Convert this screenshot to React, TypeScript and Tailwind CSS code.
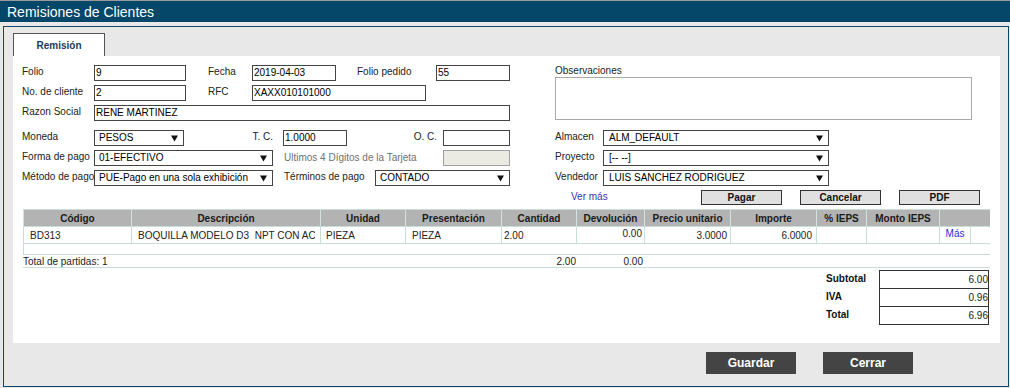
import React from "react";

const lbl = "text-[10px] leading-[14px] text-[#222] self-start whitespace-nowrap";

function Box({ className = "", children }: { className?: string; children?: React.ReactNode }) {
  return (
    <div
      className={`h-4 border border-[#444] bg-white flex items-center pl-px text-[10px] leading-[14px] text-black whitespace-nowrap overflow-hidden ${className}`}
    >
      {children}
    </div>
  );
}

function Arrow() {
  return (
    <svg width="7" height="7" viewBox="0 0 7 7" className="shrink-0">
      <polygon points="0,0.5 7,0.5 3.5,6.5" fill="#111" />
    </svg>
  );
}

function Sel({ className = "", children, pl = "pl-[4px]" }: { className?: string; children?: React.ReactNode; pl?: string }) {
  return (
    <div
      className={`h-4 border border-[#444] bg-white flex items-center justify-between ${pl} pr-[5px] text-[10px] leading-[14px] text-black whitespace-nowrap overflow-hidden ${className}`}
    >
      <span>{children}</span>
      <Arrow />
    </div>
  );
}

const cols = [
  { name: "Código", w: "w-[108px]" },
  { name: "Descripción", w: "w-[189px]" },
  { name: "Unidad", w: "w-[85px]" },
  { name: "Presentación", w: "w-[96px]" },
  { name: "Cantidad", w: "w-[75px]" },
  { name: "Devolución", w: "w-[68px]" },
  { name: "Precio unitario", w: "w-[86px]" },
  { name: "Importe", w: "w-[86px]" },
  { name: "% IEPS", w: "w-[50px]" },
  { name: "Monto IEPS", w: "w-[73px]" },
  { name: "", w: "w-[51px]" },
];

const cellB = "border-l border-[#c9ddd9] h-full flex items-center text-[10px] whitespace-pre overflow-hidden";

export default function App() {
  return (
    <div className="w-[1010px] h-[388px] bg-white font-['Liberation_Sans',Arial,sans-serif] overflow-hidden">
      {/* Title bar */}
      <div className="h-[22px] border-t border-[#9a9a9a] bg-[#044769] flex items-center pl-[7px]">
        <span className="text-white text-[14px] leading-[16px]">Remisiones de Clientes</span>
      </div>

      <div className="bg-[#e8e8e8] pt-[4px] pl-[3px] h-[366px]">
        <div className="w-[1006px] h-[361px] border border-[#0d4a6b] bg-[#e8e8e8]">
          {/* Tab */}
          <div className="ml-[9px] mt-[6px] w-[92px] h-[23px] border-t border-x border-[#555] bg-white flex items-center justify-center">
            <span className="text-[10px] font-bold text-[#1b3a57]">Remisión</span>
          </div>

          {/* White panel */}
          <div className="ml-[9px] w-[987px] h-[287px] bg-white pl-[9px] pt-[9px]">
            <div className="flex">
              {/* Left column */}
              <div className="w-[533px] flex flex-col gap-[4px]">
                <div className="flex h-4">
                  <span className={`${lbl} w-[72px]`}>Folio</span>
                  <Box className="w-[92px]">9</Box>
                  <span className={`${lbl} ml-[22px] w-[44px]`}>Fecha</span>
                  <Box className="w-[84px]">2019-04-03</Box>
                  <span className={`${lbl} ml-[21px] w-[79px]`}>Folio pedido</span>
                  <Box className="w-[74px]">55</Box>
                </div>
                <div className="flex h-4">
                  <span className={`${lbl} w-[72px]`}>No. de cliente</span>
                  <Box className="w-[92px]">2</Box>
                  <span className={`${lbl} ml-[22px] w-[44px]`}>RFC</span>
                  <Box className="w-[174px]">XAXX010101000</Box>
                </div>
                <div className="flex h-4">
                  <span className={`${lbl} w-[72px]`}>Razon Social</span>
                  <Box className="w-[416px]">RENE MARTINEZ</Box>
                </div>
                <div className="flex h-4 mt-[5px]">
                  <span className={`${lbl} w-[72px]`}>Moneda</span>
                  <Sel className="w-[90px]">PESOS</Sel>
                  <span className={`${lbl} w-[99px] text-right pr-[10px]`}>T. C.</span>
                  <Box className="w-[64px]">1.0000</Box>
                  <span className={`${lbl} w-[96px] text-right pr-[6px]`}>O. C.</span>
                  <Box className="w-[67px]"></Box>
                </div>
                <div className="flex h-4">
                  <span className={`${lbl} w-[72px]`}>Forma de pago</span>
                  <Sel className="w-[179px]">01-EFECTIVO</Sel>
                  <span className="text-[10px] leading-[16px] text-[#707070] ml-[11px] w-[159px] whitespace-nowrap">
                    Ultimos 4 Dígitos de la Tarjeta
                  </span>
                  <div className="w-[67px] h-4 border border-[#a0a0a0] bg-[#ebebe4]"></div>
                </div>
                <div className="flex h-4">
                  <span className={`${lbl} w-[72px]`}>Método de pago</span>
                  <Sel className="w-[179px]">PUE-Pago en una sola exhibición</Sel>
                  <span className={`${lbl} ml-[11px] w-[91px]`}>Términos de pago</span>
                  <Sel className="w-[135px]">CONTADO</Sel>
                </div>
              </div>

              {/* Right column */}
              <div className="flex flex-col">
                <span className="text-[10px] leading-[12px] h-[12px] text-[#222]">Observaciones</span>
                <div className="w-[417px] h-[43px] border border-[#a9a9a9] bg-white"></div>
                <div className="mt-[10px] flex flex-col gap-[4px]">
                  <div className="flex h-4">
                    <span className={`${lbl} w-[48px]`}>Almacen</span>
                    <Sel className="w-[226px]" pl="pl-[5px]">ALM_DEFAULT</Sel>
                  </div>
                  <div className="flex h-4">
                    <span className={`${lbl} w-[48px]`}>Proyecto</span>
                    <Sel className="w-[226px]" pl="pl-[5px]">[-- --]</Sel>
                  </div>
                  <div className="flex h-4">
                    <span className={`${lbl} w-[48px]`}>Vendedor</span>
                    <Sel className="w-[226px]" pl="pl-[5px]">LUIS SANCHEZ RODRIGUEZ</Sel>
                  </div>
                </div>
                <div className="mt-[4px] flex h-[15px] items-center">
                  <span className="ml-[16px] w-[130px] text-[10px] leading-[12px] text-[#3535b5] -mt-px">Ver más</span>
                  <div className="flex gap-[18px]">
                    {["Pagar", "Cancelar", "PDF"].map((b) => (
                      <div
                        key={b}
                        className="w-[81px] h-[15px] border border-[#333] bg-[#e0e0e0] flex items-center justify-center text-[10px] font-bold text-[#111]"
                      >
                        {b}
                      </div>
                    ))}
                  </div>
                </div>
              </div>
            </div>

            {/* Table */}
            <div className="ml-px mt-[4px] w-[967px]">
              <div className="flex h-[17px] border-t border-[#c9ddd9] bg-[#b3b3b3]">
                {cols.map((c, i) => (
                  <div
                    key={i}
                    className={`${c.w} border-l border-[#d3e3e0] h-full flex items-center justify-center text-[10px] font-bold text-[#1a1a1a] whitespace-nowrap`}
                  >
                    {c.name}
                  </div>
                ))}
              </div>
              <div className="flex h-[18px] border-y border-[#c9ddd9] text-[#222]">
                <div className={`${cellB} w-[108px] pl-[6px]`}>BD313</div>
                <div className={`${cellB} w-[189px] pl-[6px]`}>
                  <span className="w-[177px] shrink-0 overflow-hidden whitespace-pre">BOQUILLA MODELO D3  NPT CON ACERO</span>
                </div>
                <div className={`${cellB} w-[85px] pl-[5px]`}>PIEZA</div>
                <div className={`${cellB} w-[96px] pl-[6px]`}>PIEZA</div>
                <div className={`${cellB} w-[75px] pl-[2px]`}>2.00</div>
                <div className={`${cellB} w-[68px] justify-end pr-[2px] pb-[4px]`}>0.00</div>
                <div className={`${cellB} w-[86px] justify-end pr-[3px]`}>3.0000</div>
                <div className={`${cellB} w-[86px] justify-end pr-[4px]`}>6.0000</div>
                <div className={`${cellB} w-[50px]`}></div>
                <div className={`${cellB} w-[73px]`}></div>
                <div className={`${cellB} w-[32px] border-r justify-center pb-[4px]`}>
                  <span className="text-[#2e2ed2]">Más</span>
                </div>
              </div>
              <div className="h-[11px] border-l border-b border-[#c9ddd9]"></div>
              <div className="flex h-[13px] border-b border-[#c9ddd9] items-center text-[10px] text-[#222]">
                <span className="w-[478px] whitespace-nowrap">Total de partidas: 1</span>
                <span className="w-[75px] text-right">2.00</span>
                <span className="w-[67px] text-right">0.00</span>
              </div>

              {/* Totals */}
              <div className="mt-[2px] flex justify-end pr-px">
                <div className="flex flex-col">
                  {["Subtotal", "IVA", "Total"].map((t) => (
                    <div key={t} className="h-[18px] w-[53px] flex items-center text-[10px] font-bold text-[#111] pb-px">
                      {t}
                    </div>
                  ))}
                </div>
                <div className="w-[110px] border border-[#333] flex flex-col">
                  {["6.00", "0.96", "6.96"].map((v, i) => (
                    <div
                      key={v}
                      className={`h-[17px] flex items-center justify-end text-[10px] text-[#222] ${i > 0 ? "border-t border-[#333] h-[18px]" : ""}`}
                    >
                      {v}
                    </div>
                  ))}
                </div>
              </div>
            </div>
          </div>

          {/* Bottom buttons */}
          <div className="mt-[9px] ml-[702px] flex gap-[27px]">
            <div className="w-[90px] h-[22px] bg-[#444] flex items-center justify-center text-white text-[12px] font-bold">Guardar</div>
            <div className="w-[90px] h-[22px] bg-[#444] flex items-center justify-center text-white text-[12px] font-bold">Cerrar</div>
          </div>
        </div>
      </div>
    </div>
  );
}
